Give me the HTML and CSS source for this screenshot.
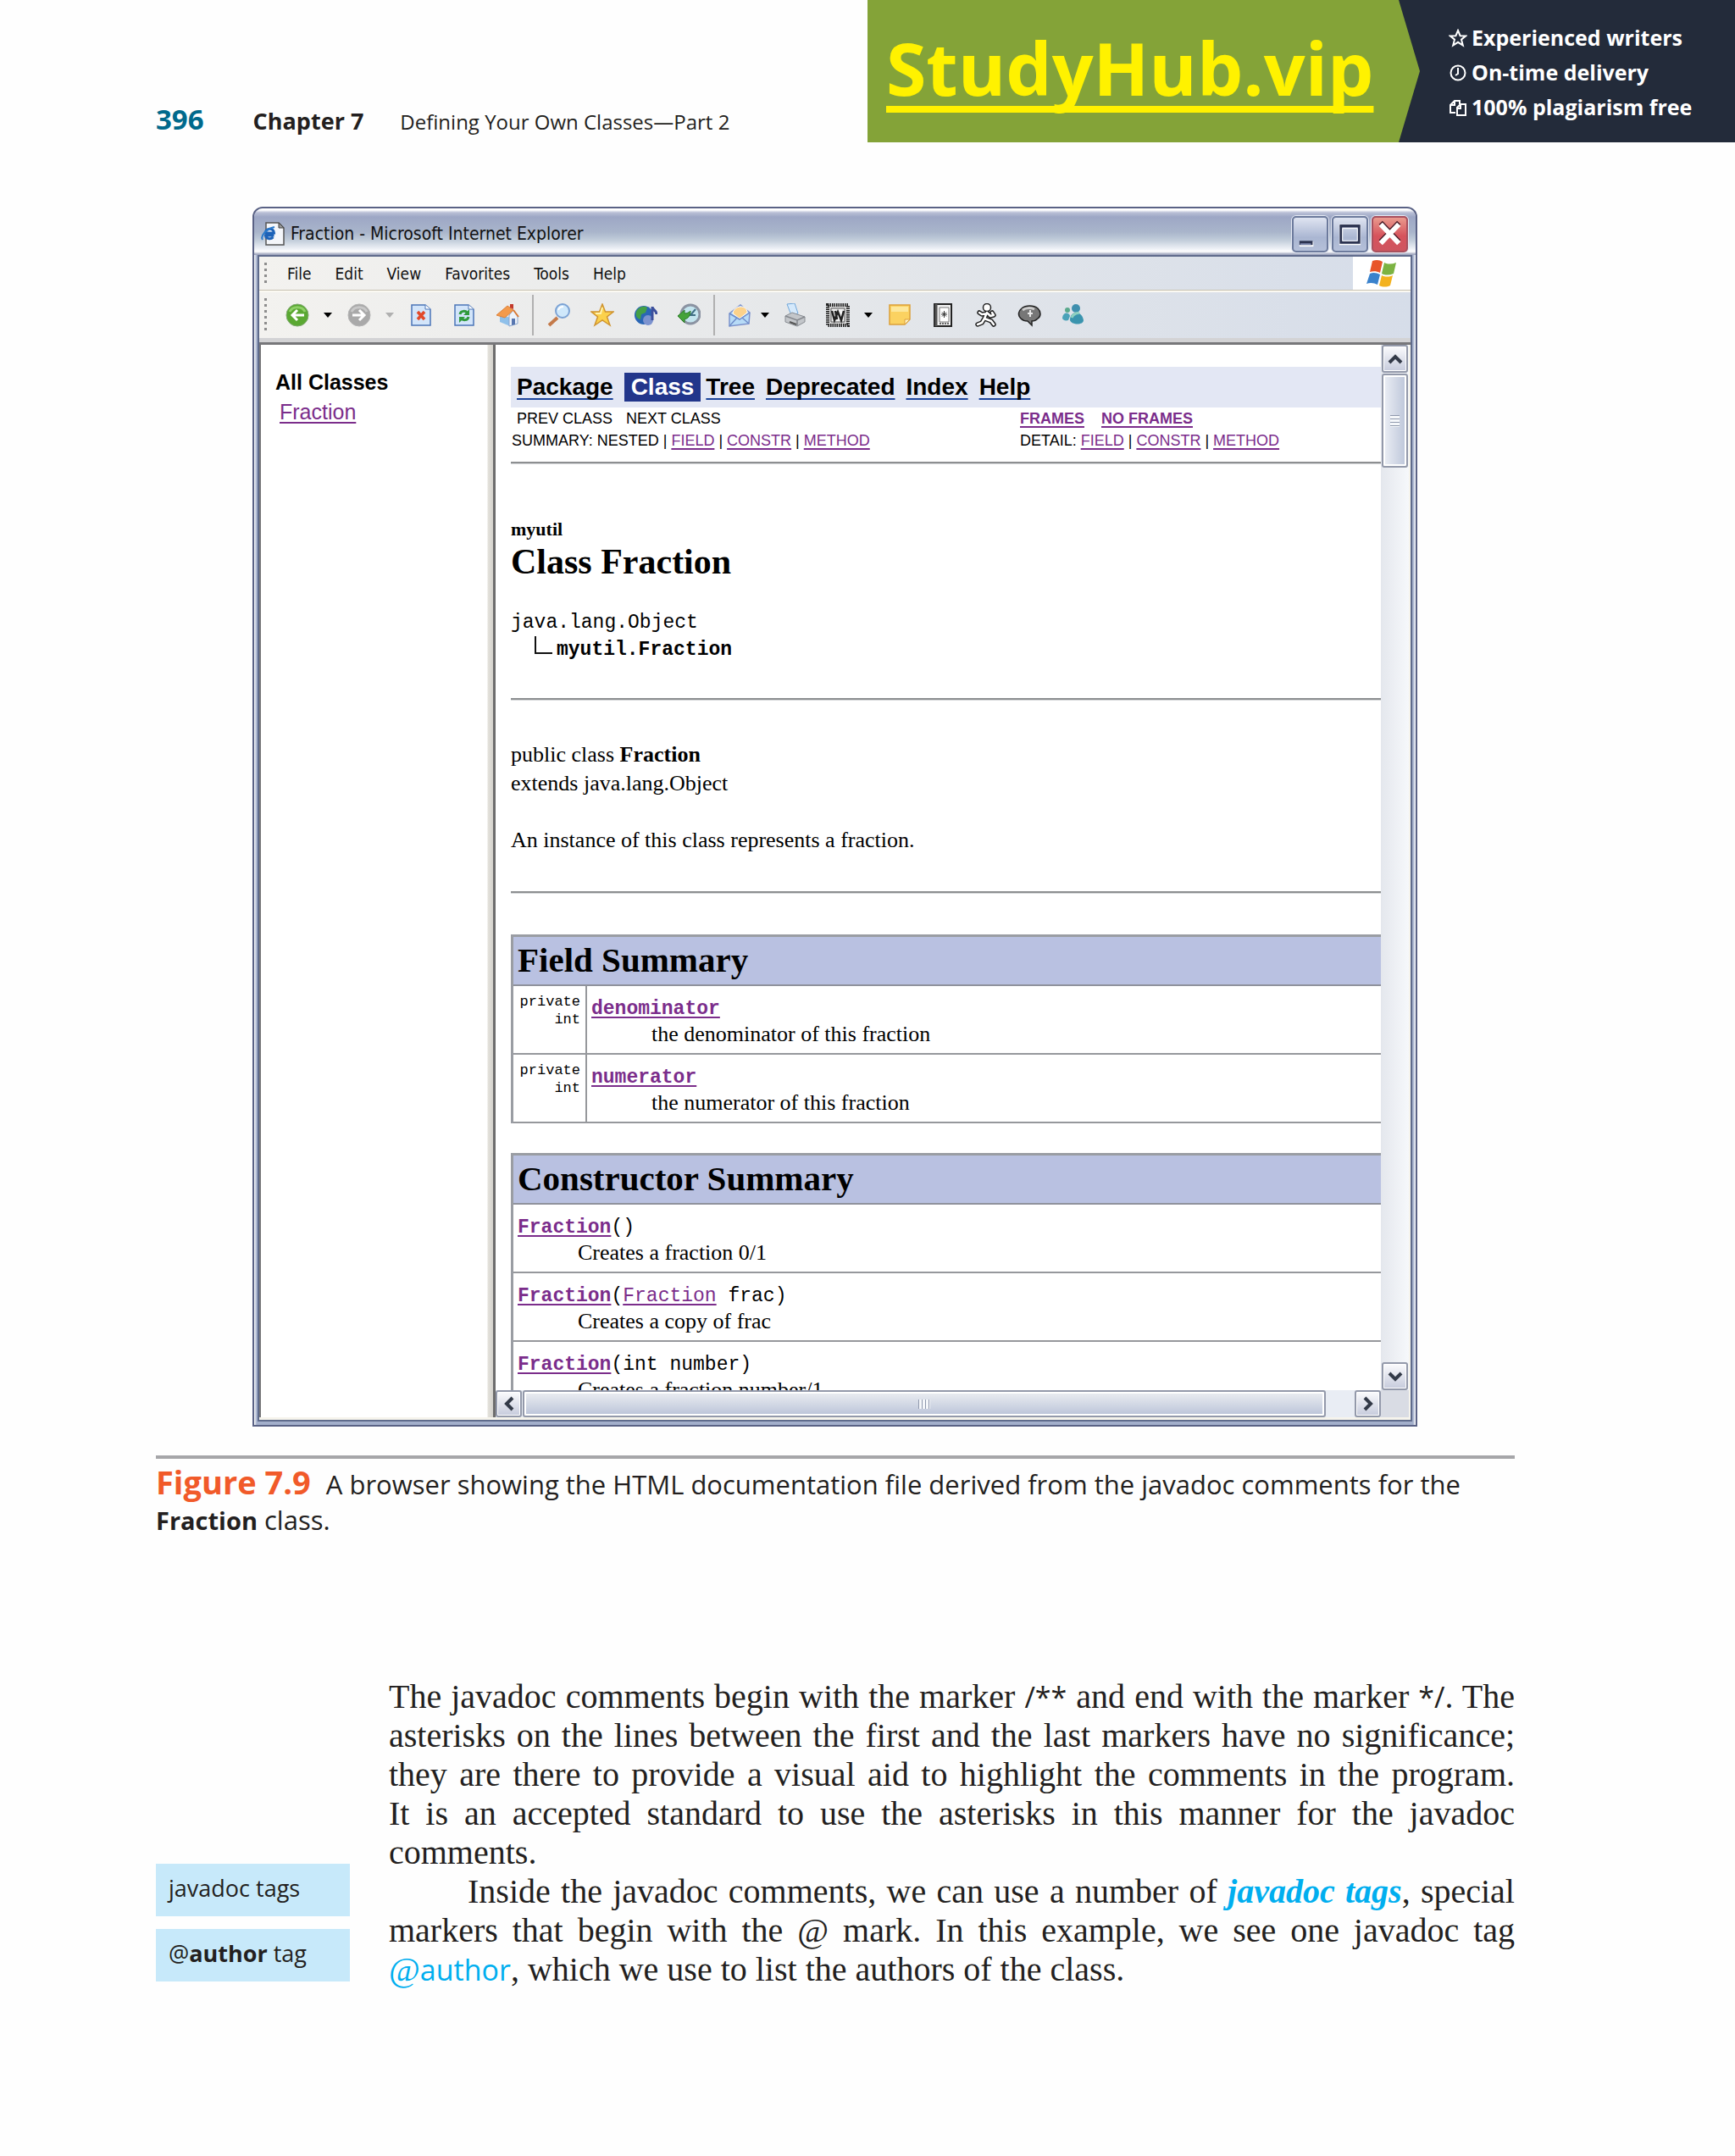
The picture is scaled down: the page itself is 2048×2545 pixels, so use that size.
FILE: index.html
```html
<!DOCTYPE html>
<html lang="en">
<head>
<meta charset="utf-8">
<title>Chapter 7: Defining Your Own Classes—Part 2</title>
<link rel="stylesheet" href="styles.css">
</head>
<body>
<header class="page-head">
  <div class="running-head">
    <span class="page-number">396</span>
    <span class="chapter">Chapter 7</span>
    <span class="chapter-title">Defining Your Own Classes—Part 2</span>
  </div>
  <div class="banner">
    <div class="banner-brand"><a href="#">StudyHub.vip</a></div>
    <ul class="benefits">
      <li><svg width="22" height="22" viewBox="0 0 22 22" fill="none" stroke="#fff" stroke-width="2"><path d="M11 2l2.600 6.200 6.400.3-5 4.200 1.800 6.800L11 15.800 5.200 19.500 7 12.700 2 8.500l6.400-.3z"/></svg>Experienced writers</li>
      <li><svg width="22" height="22" viewBox="0 0 22 22" fill="none" stroke="#fff" stroke-width="2"><circle cx="11" cy="11" r="8.500"/><path d="M11 5v7l-3 2"/></svg>On-time delivery</li>
      <li><svg width="22" height="22" viewBox="0 0 22 22" fill="none" stroke="#fff" stroke-width="2"><path d="M8 17H2V8l5-5h6v4M7 3v5H2M10 20V11l4-4h6v13zM14 7v5h-4"/></svg>100% plagiarism free</li>
    </ul>
  </div>
</header>

<main class="page">
  <figure class="figure">
    <div class="window">
      <div class="title-bar">
        <svg width="28" height="28" viewBox="0 0 28 28"><path d="M6 1h15l6 6v20H6z" fill="#f4f6fa" stroke="#555" stroke-width="1.500"/><path d="M21 1v6h6z" fill="#999" stroke="#444"/><path d="M15.500 16H5.500c.5 4 6 5 9 2M5 14c0-7 10-8 10.500-1H6" fill="none" stroke="#1c62b8" stroke-width="3"/><path d="M2 21c-3-4 4-13 14-15" fill="none" stroke="#2a7acb" stroke-width="2"/></svg>
        <span class="window-title">Fraction - Microsoft Internet Explorer</span>
        <button class="caption-button" aria-label="Minimize"><svg width="39" height="39" viewBox="0 0 40 40"><path d="M7 29h17v6H7z" fill="#fff"/><path d="M7 28h16v5H7z" fill="#2c3350"/><path d="M8 31h13v2H8z" fill="#7f8bb0"/></svg></button>
        <button class="caption-button" aria-label="Maximize"><svg width="39" height="39" viewBox="0 0 40 40"><path d="M8 9h24v23H8z" fill="none" stroke="#fff" stroke-width="2"/><path d="M9 10h22v20H9z" fill="none" stroke="#2c3350" stroke-width="3"/><path d="M8 10h24" stroke="#2c3350" stroke-width="3"/><path d="M11 13h18v15H11z" fill="none" stroke="#fff"/></svg></button>
        <button class="caption-button close" aria-label="Close"><svg width="39" height="39" viewBox="0 0 40 40"><path d="M9 6l22 23M31 6L9 29" stroke="#4a1c28" stroke-width="6"/><path d="M9 8l22 23M31 8L9 31" stroke="#fff" stroke-width="6"/></svg></button>
      </div>
      <div class="client">
        <nav class="menu-bar">
          <i class="grip"></i>
          <button>File</button><button>Edit</button><button>View</button><button>Favorites</button><button>Tools</button><button>Help</button>
          <span class="throbber"><svg width="36" height="34" viewBox="0 0 36 34"><path d="M7 2c5-2 9-1 12 1l-3 13c-4-2-8-2-12-1z" fill="#e8562a"/><path d="M21 4c4 2 9 2 14 0l-3 13c-5 2-10 2-14 0z" fill="#7cb342"/><path d="M4 17c4-2 8-1 12 1l-3 12c-4-2-8-3-13-1z" fill="#3a82cc"/><path d="M18 19c4 2 9 2 13 0l-3 12c-4 2-9 2-13 0z" fill="#f3b21e"/></svg></span>
        </nav>
        <div class="tool-bar">
          <i class="grip"></i>
          <button class="tool" aria-label="Back"><svg width="28" height="28" viewBox="0 0 28 28"><circle cx="14" cy="14" r="13" fill="#5aa832" stroke="#7fa870"/><path d="M5 10c3-7 15-7 18 0" fill="none" stroke="#8fd068" stroke-width="3"/><path d="M22 14H8M14 8l-6 6 6 6" fill="none" stroke="#fff" stroke-width="3"/></svg></button>
          <button class="drop" aria-label="Back history"><svg width="10" height="6" viewBox="0 0 10 6"><path d="M0 0h10L5 6z"/></svg></button>
          <button class="tool" aria-label="Forward"><svg width="28" height="28" viewBox="0 0 28 28"><circle cx="14" cy="14" r="13" fill="#a9a9a9" stroke="#b4b4b4"/><path d="M5 10c3-7 15-7 18 0" fill="none" stroke="#c8c8c8" stroke-width="3"/><path d="M6 14h14M14 8l6 6-6 6" fill="none" stroke="#fff" stroke-width="3"/></svg></button>
          <button class="drop" aria-label="Forward history"><svg width="10" height="6" viewBox="0 0 10 6"><path d="M0 0h10L5 6z" fill="#b0b0b0"/></svg></button>
          <button class="tool" aria-label="Stop"><svg width="28" height="28" viewBox="0 0 28 28"><path d="M3 2h16l6 5v19H3z" fill="#d3e5fa" stroke="#4c76b8" stroke-width="1.500"/><path d="M19 2v5h6" fill="#fff" stroke="#4c76b8"/><path d="M10 10l8 9M18 10l-8 9" stroke="#e2492a" stroke-width="3.500"/></svg></button>
          <button class="tool" aria-label="Refresh"><svg width="28" height="28" viewBox="0 0 28 28"><path d="M3 2h16l6 5v19H3z" fill="#d3e5fa" stroke="#4c76b8" stroke-width="1.500"/><path d="M19 2v5h6" fill="#fff" stroke="#4c76b8"/><path d="M9 13c1-5 7-4 8-2M19 16c-1 5-7 4-8 2" fill="none" stroke="#2f9a3c" stroke-width="3"/><path d="M20 7v7h-7zM8 23v-7h7z" fill="#2f9a3c"/></svg></button>
          <button class="tool" aria-label="Home"><svg width="28" height="28" viewBox="0 0 28 28"><path d="M5 13l12 4v10L5 22z" fill="#8fc0ea"/><path d="M16 14l5-6 5 7v9l-10 3z" fill="#eef3fa" stroke="#8aa6cf"/><path d="M1 14L14 3l7 5-10 9z" fill="#f39a4c" stroke="#dc8038"/><path d="M21 8l6 8" stroke="#d87a38" stroke-width="2"/><path d="M17 1h4v6l-4-2z" fill="#c23a2c"/><path d="M19 18h4v7l-4 1z" fill="#5877b0"/></svg></button>
          <i class="divider"></i>
          <button class="tool" aria-label="Search"><svg width="28" height="28" viewBox="0 0 28 28"><path d="M2 26l10-9" stroke="#c47a4a" stroke-width="4"/><circle cx="18" cy="9" r="8" fill="#cfe8fb" stroke="#7ba2d4" stroke-width="2"/><path d="M13 8c1-3 4-4 6-4" stroke="#fff" stroke-width="2" fill="none"/></svg></button>
          <button class="tool" aria-label="Favorites"><svg width="28" height="28" viewBox="0 0 28 28"><path d="M14 1l3.500 9H27l-7.500 6 3.500 10-9-6-9 6 3.500-10L1 10h9.500z" fill="#fbd14b" stroke="#cf9430" stroke-width="1.500"/><path d="M14 5l-2 7-6 0" stroke="#fff2b0" stroke-width="2" fill="none"/></svg></button>
          <button class="tool" aria-label="Media"><svg width="28" height="28" viewBox="0 0 28 28"><circle cx="12" cy="14" r="11" fill="#2a66b5"/><path d="M4 8c4-5 9-5 12-3l-2 6-5 2-1 6c-5-1-7-6-4-11z" fill="#43a047"/><circle cx="17" cy="20" r="6" fill="#7c93cf"/><path d="M22 20V4c0 4 5 4 5 9" fill="none" stroke="#3c4f9c" stroke-width="3"/></svg></button>
          <button class="tool" aria-label="History"><svg width="28" height="28" viewBox="0 0 28 28"><circle cx="16" cy="13" r="11" fill="#c3e4ee" stroke="#8b93a2" stroke-width="3"/><path d="M22 7l-6 7h6" fill="none" stroke="#3f6f86" stroke-width="2"/><path d="M1 15l8-7v4c3 0 5-1 7-3 0 6-3 9-7 10v4z" fill="#45a33a" stroke="#2d7a2a"/></svg></button>
          <i class="divider"></i>
          <button class="tool mail" aria-label="Mail"><svg width="28" height="28" viewBox="0 0 28 28"><path d="M2 12L15 2l11 9-1 13-23 3z" fill="#b7dbf7" stroke="#7c92cc" stroke-width="1.500"/><path d="M6 12c1-10 17-11 17-1l-9 7z" fill="#fcd28b" stroke="#fff"/><path d="M2 12l12 7 12-8M2 27l9-10M25 24l-8-7" fill="none" stroke="#6f8dca" stroke-width="1.500"/></svg></button>
          <button class="drop mail-drop" aria-label="Mail options"><svg width="10" height="6" viewBox="0 0 10 6"><path d="M0 0h10L5 6z"/></svg></button>
          <button class="tool" aria-label="Print"><svg width="28" height="28" viewBox="0 0 28 28"><path d="M5 1l9-1 4 12-8 2z" fill="#d5e9fb" stroke="#6fa6da"/><path d="M3 15l8-4 15 5v6l-9 5-14-5z" fill="#c3c6ca" stroke="#888c92"/><path d="M3 15l14 5 9-4M17 20v6" fill="none" stroke="#84878d" stroke-width="1.500"/><path d="M8 22l8 3" stroke="#555" stroke-width="2"/></svg></button>
          <button class="tool" aria-label="Edit with Word"><svg width="28" height="28" viewBox="0 0 28 28"><path d="M2 2h24v24H2z" fill="#d8d8d8" stroke="#222" stroke-width="4" stroke-dasharray="1.500 1"/><path d="M6 6h16v16H6z" fill="#f2f2f2" stroke="#555"/><path d="M7 9l3 11 4-10 4 10 3-11M11 9l2 10" fill="none" stroke="#222" stroke-width="2.500"/></svg></button>
          <button class="drop" aria-label="Edit options"><svg width="10" height="6" viewBox="0 0 10 6"><path d="M0 0h10L5 6z"/></svg></button>
          <button class="tool" aria-label="Notes"><svg width="28" height="28" viewBox="0 0 28 28"><path d="M2 2h24v17l-6 6H2z" fill="#fbd261" stroke="#dca03a" stroke-width="1.500"/><path d="M4 4h20v6H4z" fill="#fde79a"/><path d="M26 19h-6v6z" fill="#fff3c4" stroke="#dca03a"/></svg></button>
          <button class="tool" aria-label="Research"><svg width="28" height="28" viewBox="0 0 28 28"><path d="M4 1h20v26H4z" fill="#f2f2f2" stroke="#222" stroke-width="2"/><path d="M6 1v26" stroke="#555" stroke-width="3"/><path d="M10 5h11v17H10z" fill="#fff" stroke="#777"/><path d="M15.500 9v8M12 13h7M13 10.500l5 5M18 10.500l-5 5" stroke="#333"/><path d="M10 24h11" stroke="#666" stroke-dasharray="2 1" stroke-width="2"/></svg></button>
          <button class="tool" aria-label="AIM"><svg width="28" height="28" viewBox="0 0 28 28"><g stroke="#222" stroke-width="5.500" fill="none" stroke-linecap="round" stroke-linejoin="round"><path d="M21 11l2 3-4 1-3-3-7 1-3-2M15 11l-3 7 8 3 3 4M12 18l-3 5-5 2"/></g><circle cx="15" cy="5" r="4.500" fill="#fff" stroke="#222" stroke-width="1.500"/><path d="M21 11l2 3-4 1-3-3-7 1-3-2M15 11l-3 7 8 3 3 4M12 18l-3 5-5 2" stroke="#fff" stroke-width="2.500" fill="none" stroke-linecap="round" stroke-linejoin="round"/></svg></button>
          <button class="tool" aria-label="Discuss"><svg width="28" height="28" viewBox="0 0 28 28"><path d="M5 6c5-4 14-4 19 0 4 4 4 9 0 12-2 2-5 3-7 3v5l-5-5c-3 0-6-1-8-3-4-4-3-9 1-12z" fill="#777" stroke="#222" stroke-width="1.500"/><path d="M6 8c4-3 10-3 14-1" stroke="#ccc" stroke-width="3" fill="none"/><path d="M15 8v8M12 12h6" stroke="#e8e8e8" stroke-width="2"/></svg></button>
          <button class="tool" aria-label="Messenger"><svg width="28" height="28" viewBox="0 0 28 28"><circle cx="18" cy="6" r="5" fill="#3f8fae"/><path d="M11 20c0-12 14-12 16 0 0 6-14 6-16 0z" fill="#3a94ae"/><path d="M13 17c2-5 7-6 9-5" stroke="#8ed0c0" stroke-width="3" fill="none"/><circle cx="8" cy="8" r="3" fill="#5aa98c"/><path d="M2 17c1-7 8-7 9-2l-2 5c-3 1-7 0-7-3z" fill="#4aa2b8"/></svg></button>
        </div>
        <div class="frames">
          <section class="class-list">
            <h2>All Classes</h2>
            <a href="#">Fraction</a>
          </section>
          <section class="doc-frame">
            <div class="doc">
              <nav class="doc-nav">
                <a href="#">Package</a><span class="current">Class</span><a href="#">Tree</a><a href="#">Deprecated</a><a href="#">Index</a><a href="#">Help</a>
              </nav>
              <div class="sub-nav">
                <div>
                  <p class="steps"><span>PREV CLASS</span><span>NEXT CLASS</span></p>
                  <p>SUMMARY: NESTED | <a href="#">FIELD</a> | <a href="#">CONSTR</a> | <a href="#">METHOD</a></p>
                </div>
                <div>
                  <p class="views"><a href="#">FRAMES</a><a href="#">NO FRAMES</a></p>
                  <p>DETAIL: <a href="#">FIELD</a> | <a href="#">CONSTR</a> | <a href="#">METHOD</a></p>
                </div>
              </div>
              <hr>
              <p class="package">myutil</p>
              <h1>Class Fraction</h1>
              <div class="tree">
                <p>java.lang.Object</p>
                <p class="leaf"><svg width="22" height="22" viewBox="0 0 22 22" fill="none" stroke="#111" stroke-width="2"><path d="M1 0v20h20"/></svg><b>myutil.Fraction</b></p>
              </div>
              <hr>
              <div class="description">
                <p>public class <b>Fraction</b><br>extends java.lang.Object</p>
                <p>An instance of this class represents a fraction.</p>
              </div>
              <hr>
              <table class="summary">
                <thead><tr><th colspan="2">Field Summary</th></tr></thead>
                <tbody>
                  <tr><td class="type">private<br>int</td><td><code><a href="#"><b>denominator</b></a></code><p>the denominator of this fraction</p></td></tr>
                  <tr><td class="type">private<br>int</td><td><code><a href="#"><b>numerator</b></a></code><p>the numerator of this fraction</p></td></tr>
                </tbody>
              </table>
              <table class="summary">
                <thead><tr><th>Constructor Summary</th></tr></thead>
                <tbody>
                  <tr><td><code><a href="#"><b>Fraction</b></a>()</code><p>Creates a fraction 0/1</p></td></tr>
                  <tr><td><code><a href="#"><b>Fraction</b></a>(<a href="#">Fraction</a> frac)</code><p>Creates a copy of frac</p></td></tr>
                  <tr><td><code><a href="#"><b>Fraction</b></a>(int number)</code><p>Creates a fraction number/1</p></td></tr>
                </tbody>
              </table>
            </div>
            <div class="scroll vertical">
              <button aria-label="Scroll up"><svg width="18" height="12" viewBox="0 0 18 12"><path d="M2 10l7-7 7 7" fill="none" stroke="#333a48" stroke-width="4"/></svg></button>
              <div class="thumb"><i></i></div>
              <button class="end" aria-label="Scroll down"><svg width="18" height="12" viewBox="0 0 18 12"><path d="M2 2l7 7 7-7" fill="none" stroke="#333a48" stroke-width="4"/></svg></button>
            </div>
            <div class="scroll horizontal">
              <button aria-label="Scroll left"><svg width="12" height="18" viewBox="0 0 12 18"><path d="M10 2L3 9l7 7" fill="none" stroke="#333a48" stroke-width="4"/></svg></button>
              <div class="thumb"><i></i></div>
              <button class="end" aria-label="Scroll right"><svg width="12" height="18" viewBox="0 0 12 18"><path d="M2 2l7 7-7 7" fill="none" stroke="#333a48" stroke-width="4"/></svg></button>
            </div>
            <div class="corner"></div>
          </section>
        </div>
      </div>
    </div>
    <figcaption><b class="figure-label">Figure 7.9</b>A browser showing the HTML documentation file derived from the javadoc comments for the <b>Fraction</b> class.</figcaption>
  </figure>

  <div class="columns">
    <aside class="margin-notes">
      <p>javadoc tags</p>
      <p>@<b>author</b> tag</p>
    </aside>
    <article class="text">
      <p>The javadoc comments begin with the marker <span class="mark">/**</span> and end with the marker <span class="mark">*/</span>. The asterisks on the lines between the first and the last markers have no significance; they are there to provide a visual aid to highlight the comments in the program. It&nbsp;is an accepted standard to use the asterisks in this manner for the javadoc comments.</p>
      <p>Inside the javadoc comments, we can use a number of <em>javadoc tags</em>, special markers that begin with the @ mark. In this example, we see one javadoc tag <span class="tag">@<span class="mark">author</span></span>, which we use to list the authors of the class.</p>
    </article>
  </div>
</main>
</body>
</html>
```
FILE: styles.css
```css
* { box-sizing: border-box; }
body { margin: 0; background: #fefefe; color: #231f20; font-family: "Open Sans", "Noto Sans", sans-serif; }
p, h1, h2, figure, ul { margin: 0; padding: 0; }
svg { display: block; flex: none; }
button { margin: 0; padding: 0; border: 0; background: none; font: inherit; color: inherit; }

/* Running head and banner */
.page-head { display: flex; align-items: flex-start; }
.running-head { width: 50%; padding: 121px 0 0 184px; display: flex; align-items: baseline; line-height: 40px; white-space: nowrap; }
.page-number { color: #00698c; font-size: 33px; font-weight: 700; margin-right: 58px; }
.chapter { font-size: 27px; font-weight: 700; margin-right: 43px; }
.chapter-title { font-size: 24px; }
.banner { width: 50%; height: 168px; display: flex; background: #232b3a; }
.banner-brand { width: 652px; padding-left: 22px; background: #84a338; clip-path: polygon(0 0, calc(100% - 25px) 0, 100% 50%, calc(100% - 25px) 100%, 0 100%); }
.banner-brand a { color: #fff200; font-family: "Open Sans", sans-serif; font-size: 86px; font-weight: 700; line-height: 160px; text-decoration-thickness: 8px; text-underline-offset: 12px; text-decoration-skip-ink: none; }
.benefits { flex: 1; padding: 24px 0 0 34px; list-style: none; color: #fff; font-weight: 700; font-size: 25px; line-height: 41px; white-space: nowrap; }
.benefits li { display: flex; align-items: center; gap: 5px; }

/* Figure */
.page { padding: 76px 260px 0 184px; }
.window { margin: 0 115px 0 114px; padding: 0 4px 4px; border: 2px solid #5a6285; border-radius: 12px 12px 0 0; background: linear-gradient(90deg, #fff 0, #a3afcb 3px, #a3afcb calc(100% - 3px), #fff 100%); }
.title-bar { height: 55px; margin: 0 -4px; padding: 5px 9px 0 8px; display: flex; align-items: center; gap: 4px; border-radius: 10px 10px 0 0; background: linear-gradient(#fff 0, #fff 2px, #b9bfd6 5px, #9da7c5 10px, #a9b5cb 28px, #c3cedb 38px, #f4f6fa 49px, #fff 51px, #a2a8c0 54px); font-family: "DejaVu Sans Condensed", "DejaVu Sans", sans-serif; font-size: 21px; color: #111; }
.window-title { flex: 1; padding-left: 3px; }
.caption-button { width: 43px; height: 43px; border: 2px solid #6c7a9c; border-radius: 5px; background: linear-gradient(#dfe4f1, #aab6d2 60%, #b5c0d9); box-shadow: 0 0 0 1px #e6eaf4; }
.caption-button.close { border-color: #a8505e; background: linear-gradient(#ea9a8e, #d6535c 55%, #cf5560); }
.client { border: 2px solid #5f6b8c; background: #f6f4ec; padding-bottom: 3px; }
.menu-bar, .tool-bar { display: flex; align-items: center; background: linear-gradient(90deg, #f3f2ef, #e6e8ea 45%, #d6dde9); }
.menu-bar { height: 42px; border-bottom: 2px solid #fbf9f2; box-shadow: inset 0 -1px #c8c2b2; gap: 28px; font-family: "DejaVu Sans Condensed", "DejaVu Sans", sans-serif; font-size: 19px; color: #111; }
.grip { width: 3px; height: 26px; margin-left: 6px; background: repeating-linear-gradient(#8d8d8d 0 3px, transparent 3px 7px); }
.menu-bar .grip { margin-right: -4px; }
.tool-bar .grip { height: 40px; margin-right: 10px; }
.throbber { margin-left: auto; align-self: stretch; width: 68px; display: flex; align-items: center; justify-content: center; background: #fff; border-bottom: 1px solid #c8c2b2; }
.tool-bar { height: 62px; padding-bottom: 5px; border-bottom: 3px solid #77777a; box-shadow: inset 0 -5px #d3d3d5; }
.tool { width: 51px; height: 40px; display: flex; align-items: center; justify-content: center; }
.drop { width: 22px; height: 40px; display: flex; align-items: center; justify-content: center; }
.mail { width: 46px; padding-left: 4px; }
.mail-drop { width: 18px; }
.divider { width: 2px; height: 48px; margin: 0 4px; background: #b0b0b0; }

/* Browser frames */
.frames { display: grid; grid-template-columns: 279px 1fr; margin-right: 2px; background: #fff; color: #000; }
.class-list { padding: 27px 0 0 17px; border-left: 2px solid #77777a; border-right: 3px solid #6d6d6d; background: linear-gradient(90deg, transparent calc(100% - 7px), #e4e2dc calc(100% - 6px), #d4d2cc); font: 25px/35px "Liberation Sans", Arial, sans-serif; }
.class-list h2 { font-size: 25px; }
.class-list a { margin-left: 5px; }
.class-list a, .doc a { color: #7b2d8b; text-underline-offset: 3px; text-decoration-thickness: 2px; text-decoration-skip-ink: none; }
.doc-frame { display: grid; grid-template-columns: 1fr 33px; grid-template-rows: 1234px 32px; min-width: 0; }
.doc { overflow: hidden; padding: 26px 0 0 18px; font: 26px/34px "Liberation Serif", "Times New Roman", serif; }
.doc hr { height: 3px; margin: 0; border: 0; border-top: 2px solid #8d8f91; border-bottom: 1px solid #d5d7d9; }
.doc-nav { height: 48px; padding-left: 7px; display: flex; align-items: center; gap: 13px; background: #e3e7f4; font: 700 28px/34px "Liberation Sans", Arial, sans-serif; }
.doc .doc-nav a { color: #000; text-decoration-color: #1c459c; text-underline-offset: 4px; }
.current { padding: 0 8px; margin-right: -7px; background: #22368b; color: #fff; }
.sub-nav { display: grid; grid-template-columns: 600px 1fr; padding: 0 0 12px 1px; font: 18px/26px "Liberation Sans", Arial, sans-serif; }
.steps { display: flex; gap: 16px; padding-left: 6px; }
.views { display: flex; gap: 20px; font-weight: 700; }
.package { padding-top: 62px; font-size: 22px; line-height: 30px; font-weight: 700; }
.doc h1 { font-size: 42px; line-height: 46px; }
.tree { padding: 33px 0 41px; font: 23px/32px "Liberation Mono", "Courier New", monospace; }
.leaf { display: flex; align-items: flex-start; gap: 4px; padding-left: 28px; }
.description { display: grid; gap: 33px; padding: 47px 0 43px; }
.summary { width: 100%; margin: 48px 0 36px; border-collapse: separate; border-spacing: 0; border: solid #9a9da3; border-width: 3px 0 0 3px; }
.summary + .summary { margin-top: -1px; }
.summary th { height: 58px; padding: 0 0 2px 5px; border-bottom: 2px solid #8f929c; background: #b9c1e1; text-align: left; font-size: 41px; line-height: 54px; }
.summary td { padding: 12px 5px 7px; border-bottom: 2px solid #96989c; line-height: 30px; vertical-align: top; }
.summary code { display: block; font: 23px/30px "Liberation Mono", "Courier New", monospace; }
.summary td p { padding-left: 71px; }
.summary .type { width: 87px; padding: 8px 6px 0 0; border-right: 2px solid #96989c; text-align: right; font: 17px/21px "Liberation Mono", "Courier New", monospace; }

/* Scroll bars */
.scroll { display: flex; background: linear-gradient(90deg, #e4e7ed, #f6f8fb); gap: 1px; }
.scroll button { width: 31px; height: 33px; display: flex; align-items: center; justify-content: center; border: 2px solid #9399aa; border-radius: 3px; background: linear-gradient(#fbfbfd, #c6cbdc); box-shadow: inset 0 0 0 1px #fff; }
.vertical { flex-direction: column; padding: 0 1px; }
.thumb { display: flex; align-items: center; justify-content: center; border: 2px solid #9399aa; border-radius: 3px; box-shadow: inset 0 0 0 2px #fff; }
.vertical .thumb { height: 111px; background: linear-gradient(90deg, #eceff5, #bcc5d9); }
.vertical .thumb i { width: 11px; height: 14px; background: repeating-linear-gradient(#8f98ac 0 1px, #f5f7fa 1px 4px); }
.scroll .end { margin-top: auto; }
.horizontal { background: #e9edf4; }
.horizontal button { height: 32px; }
.horizontal .thumb { flex: 1; margin-right: 33px; background: linear-gradient(#eceef2, #bac3d8); }
.horizontal .thumb i { width: 14px; height: 11px; background: repeating-linear-gradient(90deg, #8f98ac 0 1px, #f5f7fa 1px 4px); }
.corner { background: #d9dce4; }

/* Caption */
figcaption { margin-top: 34px; padding-top: 6px; border-top: 4px solid #a6a6a9; font-size: 31px; line-height: 42px; }
.figure-label { margin-right: 18px; color: #f15a29; font-size: 38px; }
figcaption b:not(.figure-label) { font-size: 29px; }

/* Body text */
.columns { display: grid; grid-template-columns: 229px 1fr; gap: 46px; margin-top: 164px; }
.margin-notes { align-self: end; display: grid; gap: 15px; padding-bottom: 9px; font-size: 27px; line-height: 58px; }
.margin-notes p { padding: 0 0 4px 15px; background: #c7e9fa; }
.text { font: 40px/46px "Liberation Serif", "Times New Roman", serif; text-align: justify; }
.text p + p { text-indent: 93px; }
.text em { color: #00aeef; font-weight: 700; }
.mark { font-family: "Open Sans", "Noto Sans", sans-serif; font-size: 34px; line-height: 40px; }
.tag { color: #00aeef; }
```
